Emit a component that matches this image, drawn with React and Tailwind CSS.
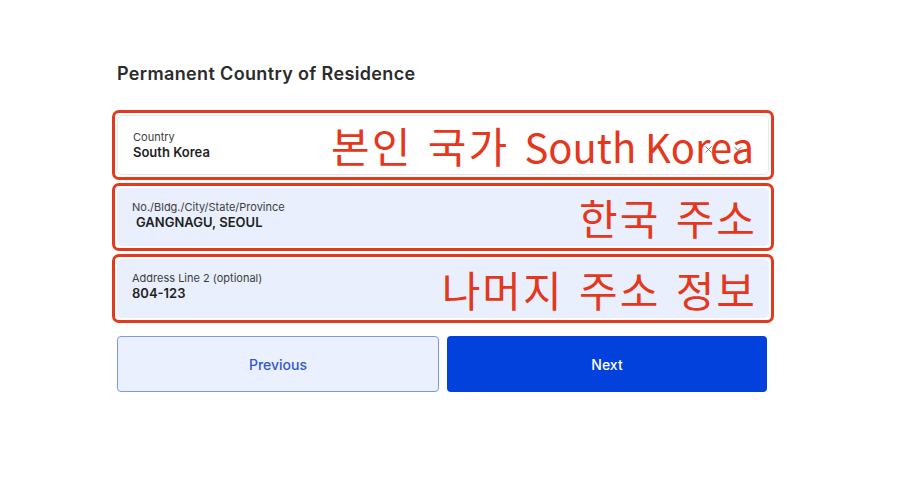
import { X, ChevronDown } from 'lucide-react';

const ui = { fontFamily: 'Inter, "Noto Sans", sans-serif' };
const note = { fontFamily: '"Noto Sans CJK KR", "Noto Sans", sans-serif' };

// korean part of the red note: written a little wider than the CJK font gives
function Ko({ children }) {
  return (
    <span className="text-[42px] tracking-[2px]" style={{ wordSpacing: '4px' }}>
      {children}
    </span>
  );
}

function Field({ label, value, note: text, white, indent, h, children }) {
  return (
    <div className="rounded-[7px] border-[3px] border-[#e3391d] p-[2px]">
      <div
        className={`relative flex flex-col justify-center rounded-[5px] pl-[15px] ${h} ${
          white ? 'border border-[#e6e8ec] bg-white' : 'bg-[#e9effc] pb-[4px]'
        }`}
      >
        <span className="text-[11px] leading-[14px] text-[#3d3d3d]">{label}</span>
        <span className={`text-[13px] font-semibold leading-[17px] text-[#1f1f1f] ${indent ? 'pl-[4px]' : ''}`}>
          {value}
        </span>
        {children}
        {/* red annotation written over the field */}
        <span
          className="absolute right-[14px] top-1/2 -translate-y-1/2 whitespace-pre text-[40px] leading-none text-[#e4371c]"
          style={note}
        >
          {text}
        </span>
      </div>
    </div>
  );
}

export default function App() {
  return (
    <div className="h-[501px] w-[920px] bg-white" style={ui}>
      <div className="w-[774px] pl-[112px] pt-[62px]">
        <h2 className="pl-[5px] text-[18px] font-semibold leading-[24px] tracking-[0.35px] text-[#2b2b2b]">
          Permanent Country of Residence
        </h2>

        <div className="mt-[24px] flex flex-col gap-[3px]">
          <Field
            label="Country"
            value="South Korea"
            note={<><Ko>본인 국가 </Ko>South Korea</>}
            white
            h="h-[60px]"
          >
            <div className="absolute right-[24px] top-[27px] flex items-center gap-[18px] text-[#6b6b6b]">
              <X size={11} strokeWidth={2} />
              <ChevronDown size={12} strokeWidth={2} />
            </div>
          </Field>
          <Field
            label="No./Bldg./City/State/Province"
            value="GANGNAGU, SEOUL"
            note={<span className="-mr-[2px]"><Ko>한국 주소</Ko></span>}
            indent
            h="h-[58px]"
          />
          <Field
            label="Address Line 2 (optional)"
            value="804-123"
            note={<span className="-mr-[2px]"><Ko>나머지 주소 정보</Ko></span>}
            h="h-[59px]"
          />
        </div>

        <div className="mt-[13px] flex gap-[8px] pl-[5px] pr-[7px]">
          <button className="h-[56px] flex-1 rounded-[4px] border border-[#7d97e2] bg-[#eaf0fd] text-[14px] font-medium text-[#2f59cf]">
            Previous
          </button>
          <button className="h-[56px] flex-1 rounded-[4px] bg-[#0341dc] text-[14px] font-medium text-white">
            Next
          </button>
        </div>
      </div>
    </div>
  );
}
